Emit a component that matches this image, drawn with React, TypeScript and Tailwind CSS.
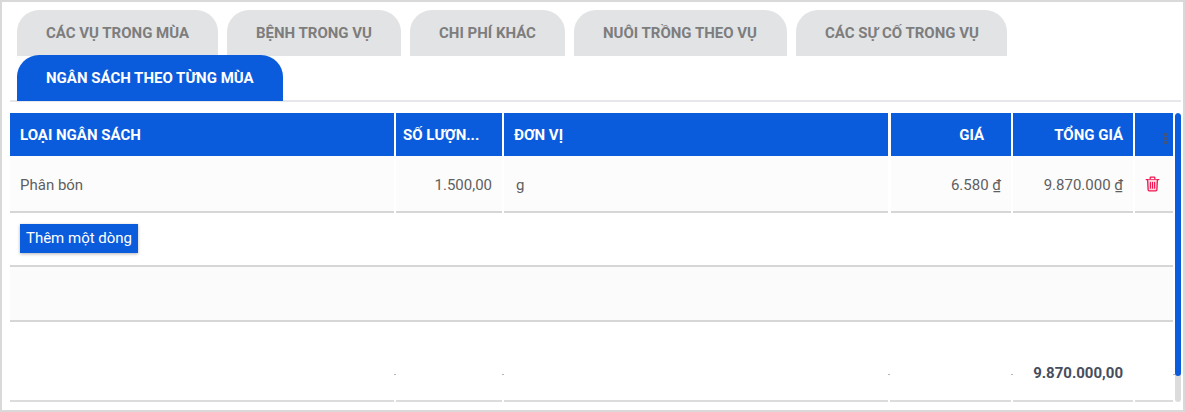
import React from "react";

const tabs = [
  { label: "CÁC VỤ TRONG MÙA", w: "w-[201px]" },
  { label: "BỆNH TRONG VỤ", w: "w-[174px]" },
  { label: "CHI PHÍ KHÁC", w: "w-[155px]" },
  { label: "NUÔI TRỒNG THEO VỤ", w: "w-[213px]" },
  { label: "CÁC SỰ CỐ TRONG VỤ", w: "w-[211px]" },
];

const cols = "grid grid-cols-[384px_106px_384px_121px_120px_38px] gap-x-[2px]";

function Trash() {
  return (
    <svg width="15" height="16" viewBox="0 0 15 16" fill="none" stroke="#f0164f" strokeWidth="1.3" strokeLinecap="round" strokeLinejoin="round">
      <path d="M1.2 3.6h12.6" />
      <path d="M5.2 3.4V1.8c0-.4.3-.7.7-.7h3.2c.4 0 .7.3.7.7v1.6" />
      <path d="M2.6 3.8l.5 9.8c0 .7.5 1.2 1.1 1.2h6.6c.6 0 1.1-.5 1.1-1.2l.5-9.8" fill="#fbd5df" />
      <path d="M5.4 6.4v5.8M7.5 6.4v5.8M9.6 6.4v5.8" strokeWidth="1.1" />
    </svg>
  );
}

function Head({ children, right, className = "" }: { children?: React.ReactNode; right?: boolean; className?: string }) {
  return (
    <div className={`h-[43px] pt-[1px] bg-[#0a5cdc] text-white font-bold text-[15px] flex items-center whitespace-nowrap overflow-hidden ${right ? "justify-end pr-[10px]" : "pl-[10px]"} ${className}`}>
      {children}
    </div>
  );
}

function Cell({ children, right, className = "" }: { children?: React.ReactNode; right?: boolean; className?: string }) {
  return (
    <div className={`h-[57px] pt-[3px] bg-[#fcfcfc] border-b-2 border-[#d6d6d6] text-[15px] text-[#5f5f5f] flex items-center ${right ? "justify-end pr-[10px]" : "pl-[10px]"} ${className}`}>
      {children}
    </div>
  );
}

function Foot({ children }: { children?: React.ReactNode }) {
  return (
    <div className="h-[80px] border-b-2 border-[#dcdcdc] flex items-end justify-end pb-[17px] pr-[10px] text-[15px] leading-[20px] font-bold text-[#474d5c]">
      {children}
    </div>
  );
}

function Dash() {
  return (
    <div className="h-[80px] border-b-2 border-[#dcdcdc] flex items-end justify-end pb-[25px]">
      <span className="w-[2px] h-[1px] bg-[#b5b5b5] -mr-[2px]" />
    </div>
  );
}

export default function App() {
  return (
    <div className="w-[1185px] h-[412px] bg-white border-2 border-[#d9d9d9] overflow-hidden pt-[8px] pl-[8px] pr-[2px]" style={{ fontFamily: "Roboto, sans-serif" }}>
      <div className="pl-[7px] border-b-2 border-[#e6e7ea] h-[92px] flex flex-wrap content-start gap-x-[9px]">
        {tabs.map((t) => (
          <div key={t.label} className={`${t.w} h-[46px] bg-[#e2e3e5] rounded-t-[22px] text-[#7d7d7d] font-bold text-[15px] flex items-center pl-[29px] whitespace-nowrap`}>
            {t.label}
          </div>
        ))}
        <div className="w-[266px] h-[46px] -mt-[1px] bg-[#0a5cdc] rounded-t-[22px] text-white font-bold text-[15px] flex items-center pl-[29px] whitespace-nowrap">
          NGÂN SÁCH THEO TỪNG MÙA
        </div>
      </div>

      <div className="flex mt-[11px] gap-x-[2px]">
        <div className="w-[1163px]">
          <div className={cols}>
            <Head>LOẠI NGÂN SÁCH</Head>
            <Head className="!pl-[7px]">SỐ LƯỢN...</Head>
            <Head>ĐƠN VỊ</Head>
            <Head right className="!pr-[27px] ml-[1px]">GIÁ</Head>
            <Head right>TỔNG GIÁ</Head>
            <div className="h-[43px] bg-[#0a5cdc] flex items-center justify-end pr-[6px]">
              <div className="flex flex-col gap-[1px] pt-[7px]">
                <span className="w-[3px] h-[3px] bg-[#3f5580]" />
                <span className="w-[3px] h-[3px] bg-[#3f5580]" />
                <span className="w-[3px] h-[3px] bg-[#3f5580]" />
              </div>
            </div>

            <Cell>Phân bón</Cell>
            <Cell right>1.500,00</Cell>
            <Cell className="!pl-[12px]">g</Cell>
            <Cell right className="ml-[1px]">6.580 ₫</Cell>
            <Cell right>9.870.000 ₫</Cell>
            <Cell className="!pl-[10px] !pt-[1px]"><Trash /></Cell>
          </div>

          <div className="h-[54px] border-b-2 border-[#d6d6d6] pl-[10px] pt-[11px]">
            <button className="w-[118px] h-[29px] bg-[#0a5cdc] text-white text-[15px] shadow-[0_1px_3px_rgba(0,0,0,0.3)]">
              Thêm một dòng
            </button>
          </div>
          <div className="h-[55px] bg-[#fbfbfb] border-b-2 border-[#d6d6d6]" />

          <div className={cols}>
            <Dash />
            <Dash />
            <Dash />
            <Dash />
            <Foot>9.870.000,00</Foot>
            <Dash />
          </div>
        </div>

        <div className="w-[6px] h-[289px] rounded-full bg-[#dcdcdc] overflow-hidden">
          <div className="h-[263px] bg-[#0a5cdc] rounded-full" />
        </div>
      </div>
    </div>
  );
}
